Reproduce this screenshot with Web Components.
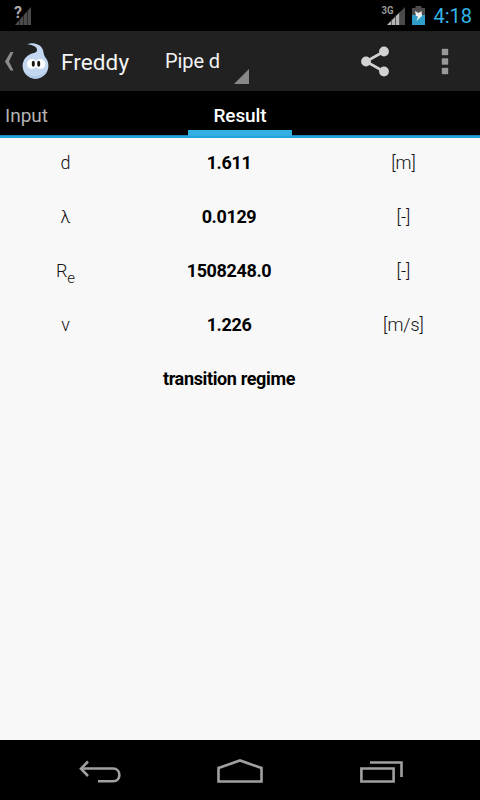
<!DOCTYPE html>
<html lang="en">
<head>
<meta charset="utf-8">
<title>Freddy</title>
<style>
    body {
        margin: 0;
        background: #000;
        font-family: Roboto, sans-serif;
    }
</style>
</head>
<body>

<phone-screen>
    <status-bar slot="top" time="4:18"></status-bar>
    <action-bar slot="top" heading="Freddy">Pipe d</action-bar>
    <tab-strip slot="top">
        <tab-item>Input</tab-item>
        <tab-item selected>Result</tab-item>
        <tab-item></tab-item>
    </tab-strip>
    <result-row name="d" unit="[m]">1.611</result-row>
    <result-row name="λ" unit="[-]">0.0129</result-row>
    <result-row name="R" sub="e" unit="[-]">1508248.0</result-row>
    <result-row name="v" unit="[m/s]">1.226</result-row>
    <result-row>transition regime</result-row>
    <nav-bar slot="bottom"></nav-bar>
</phone-screen>

<script>
function render(el, html) {
    const template = document.createElement("template");
    template.innerHTML = html;
    el.attachShadow({mode: "open"}).appendChild(template.content.cloneNode(true));
}

class PhoneScreen extends HTMLElement {
    constructor() {
        super();
        render(this, `
            <style>
                :host {
                    display: flex;
                    flex-direction: column;
                    height: 800px;
                    overflow: hidden;
                }
                main {
                    flex: 1;
                    background: #f8f8f8;
                }
            </style>
            <slot name="top"></slot>
            <main><slot></slot></main>
            <slot name="bottom"></slot>
        `);
    }
}

class StatusBar extends HTMLElement {
    constructor() {
        super();
        render(this, `
            <style>
                :host {
                    display: flex;
                    align-items: center;
                    height: 31px;
                    padding: 0 8px 0 13px;
                    box-sizing: border-box;
                    background: #000;
                    color: #33b5e5;
                }
                svg { display: block; }
                .gap { flex: 1; }
                .battery { margin: 0 8px 0 6px; }
                .time {
                    font-size: 20px;
                    line-height: 31px;
                    padding-top: 2px;
                }
            </style>
            <svg width="19" height="31" viewBox="13 0 19 31">
                <path d="M15 25 L31 7 V25 Z" fill="#4c4c4c"/>
                <path d="M19.500 8V25M23.500 8V25M27.500 8V25" stroke="#000" stroke-opacity=".45"/>
                <text x="14" y="17.500" font-family="Roboto" font-weight="700" font-size="16" fill="#aaa" stroke="#000" stroke-width="1" paint-order="stroke">?</text>
            </svg>
            <div class="gap"></div>
            <svg width="25" height="31" viewBox="381 0 25 31">
                <path d="M387 25 L405 7 V25 Z" fill="#4a4a4a"/>
                <path d="M387 25 L400 12 V25 Z" fill="#b4b4b4"/>
                <path d="M391.500 19V25M395.500 15V25M399.500 12V25" stroke="#333" stroke-opacity=".7"/>
                <text x="381.500" y="14" font-family="Roboto" font-weight="700" font-size="10.500" fill="#999" textLength="12" lengthAdjust="spacingAndGlyphs">3G</text>
            </svg>
            <svg class="battery" width="13" height="31" viewBox="412 0 13 31">
                <path d="M412 8h3.500V6h6V8H425V25H412Z" fill="#4c4c4c"/>
                <path d="M412 15H425V25H412Z" fill="#2f9dc7"/>
                <path d="M415 11 L418.500 13 L421.500 11 L422 16 L416.500 21 L418 16.500 L416 16 Z" fill="#eee"/>
            </svg>
            <div class="time"></div>
        `);
        this.shadowRoot.querySelector(".time").textContent = this.getAttribute("time");
    }
}

class ActionBar extends HTMLElement {
    constructor() {
        super();
        render(this, `
            <style>
                :host {
                    display: flex;
                    align-items: center;
                    height: 60px;
                    background: #212121;
                    color: #f3f3f3;
                }
                svg { display: block; flex: none; }
                .heading {
                    width: 94px;
                    margin-left: 11px;
                    font-size: 22.500px;
                    letter-spacing: .1px;
                    line-height: 60px;
                    padding-top: 2px;
                }
                .spinner {
                    display: flex;
                    align-items: center;
                    justify-content: space-between;
                    width: 84px;
                    height: 60px;
                    margin-left: 10px;
                    font-size: 20px;
                    letter-spacing: -.1px;
                    line-height: 62px;
                    white-space: nowrap;
                }
                .corner {
                    align-self: flex-end;
                    margin-bottom: 7px;
                }
                .actions {
                    display: flex;
                    margin-left: auto;
                }
            </style>
            <svg width="50" height="60" viewBox="0 31 50 60">
                <path d="M10.500 52 H13.500 L9 61.500 L13.500 70.500 H10.500 L5 61.500 Z" fill="#8b8b8b"/>
                <path d="M27.500 44.200 C32 42.300 39 43.600 42 48 C44 51 43.200 54 45 57 C47.300 59.500 48.400 62 48.400 66 C48.400 73 42.500 78.800 35.500 78.800 C28.500 78.800 22.600 73 22.600 66 C22.600 59 28 54 34 53 C37 52 37.800 50.500 36.500 48 C35 45.500 31 44.800 27.500 44.200 Z" fill="#c3d8f0"/>
                <path d="M25 72 C29 77 40 78 46 71 C43 77 39 78.500 35.500 78.500 C31 78.500 27 76 25 72Z" fill="#b3cae6"/>
                <ellipse cx="32" cy="64" rx="5" ry="5" fill="#fff"/>
                <ellipse cx="40.300" cy="64" rx="5" ry="5" fill="#fff"/>
                <ellipse cx="33.300" cy="63.700" rx="1.500" ry="3" fill="#151515"/>
                <ellipse cx="38.700" cy="63.700" rx="1.500" ry="3" fill="#151515"/>
            </svg>
            <div class="heading"></div>
            <div class="spinner">
                <slot></slot>
                <svg class="corner" width="16" height="15" viewBox="0 0 16 15"><path d="M16 0 V15 H1 Z" fill="#888"/></svg>
            </div>
            <div class="actions">
                <svg width="70" height="60" viewBox="340 31 70 60">
                    <path d="M384 51.500 L366 61.500 L384 71.500" fill="none" stroke="#d2d2d2" stroke-width="2.600"/>
                    <g fill="#d2d2d2">
                        <circle cx="366" cy="61.500" r="4.900"/>
                        <circle cx="384" cy="51.500" r="4.900"/>
                        <circle cx="384" cy="71.500" r="4.900"/>
                    </g>
                </svg>
                <svg width="70" height="60" viewBox="410 31 70 60">
                    <path d="M442 49h6v6h-6zM442 58.500h6v6h-6zM442 68h6v6h-6z" fill="#999" stroke="#999" stroke-width=".4"/>
                </svg>
            </div>
        `);
        this.shadowRoot.querySelector(".heading").textContent = this.getAttribute("heading");
    }
}

class TabStrip extends HTMLElement {
    constructor() {
        super();
        render(this, `
            <style>
                :host {
                    display: grid;
                    grid-template-columns: 188px 104px 188px;
                    height: 47px;
                    background: linear-gradient(#000 44px, #1d8ab5 44px 45px, #22a3dc 45px);
                }
            </style>
            <slot></slot>
        `);
    }
}

class TabItem extends HTMLElement {
    constructor() {
        super();
        render(this, `
            <style>
                :host {
                    height: 45px;
                    box-sizing: border-box;
                    padding-left: 5px;
                    font-size: 19px;
                    line-height: 49px;
                    color: #b3b3b3;
                }
                :host([selected]) {
                    padding-left: 0;
                    border-bottom: 6px solid #33afe2;
                    text-align: center;
                    letter-spacing: -.1px;
                    font-weight: 500;
                    color: #fff;
                }
            </style>
            <slot></slot>
        `);
    }
}

class ResultRow extends HTMLElement {
    constructor() {
        super();
        render(this, `
            <style>
                :host {
                    display: grid;
                    grid-template-columns: 131px 196px 153px;
                    height: 54px;
                    line-height: 49px;
                    font-size: 18px;
                    text-align: center;
                    color: #111;
                }
                .name, .unit { font-weight: 300; }
                .value {
                    font-weight: 700;
                    letter-spacing: -.36px;
                    color: #000;
                }
                sub {
                    font-size: 15px;
                    line-height: 0;
                    vertical-align: -6px;
                }
            </style>
            <div class="name"><span></span><sub></sub></div>
            <div class="value"><slot></slot></div>
            <div class="unit"></div>
        `);
        this.shadowRoot.querySelector(".name span").textContent = this.getAttribute("name");
        this.shadowRoot.querySelector("sub").textContent = this.getAttribute("sub");
        this.shadowRoot.querySelector(".unit").textContent = this.getAttribute("unit");
    }
}

class NavBar extends HTMLElement {
    constructor() {
        super();
        render(this, `
            <style>
                :host {
                    display: flex;
                    justify-content: center;
                    height: 60px;
                    background: #000;
                }
                svg {
                    display: block;
                    fill: none;
                    stroke: #a0a0a0;
                    stroke-width: 2.600;
                }
            </style>
            <svg width="140" height="60" viewBox="30 740 140 60">
                <path d="M81 768.500 H113 C121.500 768.500 121.500 781.300 113 781.300 H98"/>
                <path d="M88 761.500 L81 768.700 L88 776"/>
            </svg>
            <svg width="140" height="60" viewBox="170 740 140 60">
                <path d="M218.500 781.500 V768 L240 760.500 L261.500 768 V781.500 Z"/>
            </svg>
            <svg width="140" height="60" viewBox="310 740 140 60">
                <path d="M361.400 768.500 H393.600 V781.500 H361.400 Z M370 762.500 H401.500 V777"/>
            </svg>
        `);
    }
}

customElements.define("phone-screen", PhoneScreen);
customElements.define("status-bar", StatusBar);
customElements.define("action-bar", ActionBar);
customElements.define("tab-strip", TabStrip);
customElements.define("tab-item", TabItem);
customElements.define("result-row", ResultRow);
customElements.define("nav-bar", NavBar);
</script>
</body>
</html>
